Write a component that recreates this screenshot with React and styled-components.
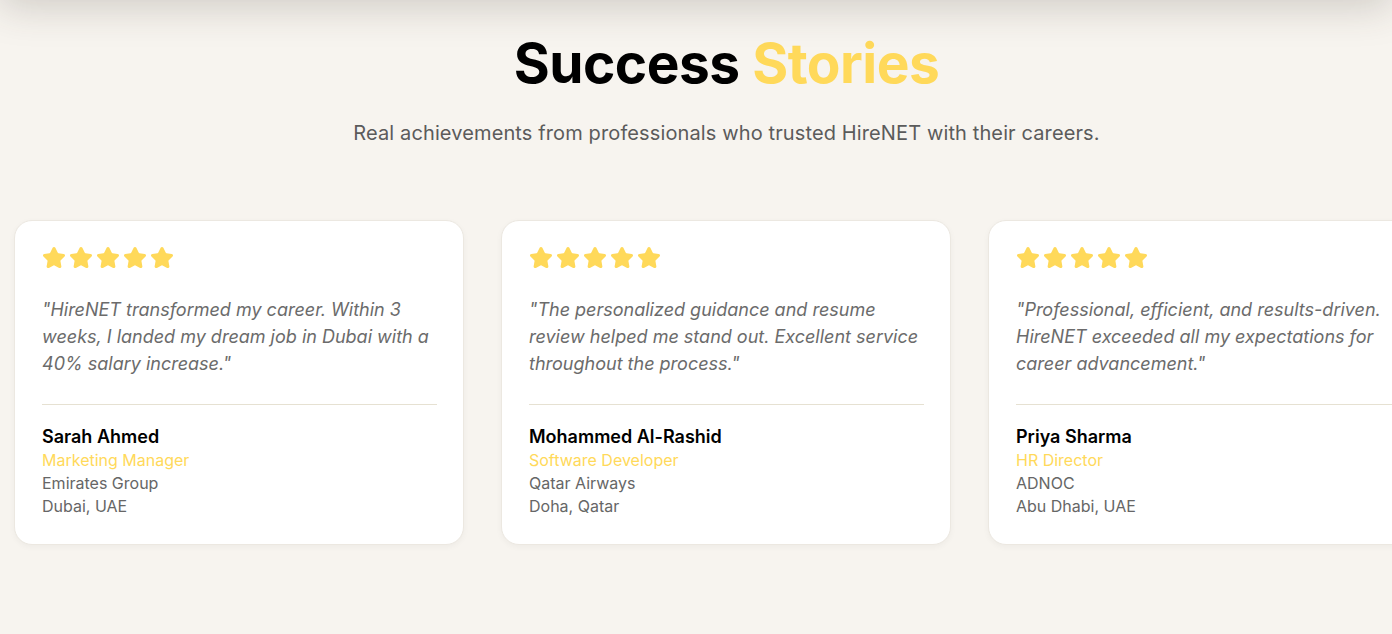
import React from "react";
import styled, { createGlobalStyle } from "styled-components";

const Global = createGlobalStyle`
  html, body { margin: 0; padding: 0; }
  body {
    background: #f7f4ef;
    font-family: Inter, "Noto Sans", sans-serif;
    overflow: hidden;
  }
`;

const HeaderShadow = styled.div`
  position: fixed;
  top: -60px;
  left: 0;
  right: 0;
  height: 60px;
  background: #f7f4ef;
  box-shadow: 0 6px 40px rgba(60, 50, 40, 0.22);
  z-index: 5;
`;

const Section = styled.section`
  width: 1455px;
  box-sizing: border-box;
  padding: 29px 16px 60px 14px;
  display: flex;
  flex-direction: column;
  align-items: center;
`;

const Title = styled.h2`
  margin: 0;
  font-size: 55px;
  line-height: 68px;
  font-weight: 700;
  color: #000;
  letter-spacing: -0.5px;
`;

const Accent = styled.span`
  color: #ffd95a;
`;

const Subtitle = styled.p`
  margin: 22px 0 0;
  font-size: 20px;
  line-height: 28px;
  letter-spacing: 0.12px;
  color: #5b5b5b;
`;

const Cards = styled.div`
  margin-top: 73px;
  width: 100%;
  display: grid;
  grid-template-columns: repeat(3, 450px);
  gap: 37px;
`;

const Card = styled.article`
  background: #fff;
  border: 1px solid #ece8e1;
  border-radius: 18px;
  box-shadow: 0 2px 6px rgba(0, 0, 0, 0.04);
  padding: 25px 26px 26px 27px;
  display: flex;
  flex-direction: column;
`;

const Stars = styled.div`
  display: flex;
  gap: 3px;
`;

const Quote = styled.p`
  margin: 26px 0 0;
  font-size: 18px;
  line-height: 27px;
  font-style: italic;
  color: #6b6b6b;
  min-height: 81px;
`;

const Divider = styled.hr`
  margin: 27px 0 0;
  border: none;
  border-top: 1px solid #e6e1d2;
`;

const Person = styled.div`
  margin-top: 20px;
  display: flex;
  flex-direction: column;
`;

const Name = styled.div`
  font-size: 18px;
  line-height: 24px;
  font-weight: 600;
  color: #000;
`;

const Line = styled.div`
  font-size: 16px;
  line-height: 23px;
  color: ${(p) => (p.$accent ? "#ffd95a" : "#666")};
`;

const Star = () => (
  <svg width="24" height="24" viewBox="0 0 24 24" fill="#ffd95a" stroke="#ffd95a" strokeWidth="2" strokeLinejoin="round" strokeLinecap="round">
    <path d="M11.525 2.295a.53.53 0 0 1 .95 0l2.31 4.679a2.123 2.123 0 0 0 1.595 1.16l5.166.756a.53.53 0 0 1 .294.904l-3.736 3.638a2.123 2.123 0 0 0-.611 1.878l.882 5.14a.53.53 0 0 1-.771.56l-4.618-2.428a2.122 2.122 0 0 0-1.973 0L6.396 21.01a.53.53 0 0 1-.77-.56l.881-5.139a2.122 2.122 0 0 0-.611-1.879L2.16 9.795a.53.53 0 0 1 .294-.906l5.165-.755a2.122 2.122 0 0 0 1.597-1.16z" />
  </svg>
);

const stories = [
  {
    quote: "\"HireNET transformed my career. Within 3 weeks, I landed my dream job in Dubai with a 40% salary increase.\"",
    name: "Sarah Ahmed",
    role: "Marketing Manager",
    company: "Emirates Group",
    location: "Dubai, UAE",
  },
  {
    quote: "\"The personalized guidance and resume review helped me stand out. Excellent service throughout the process.\"",
    name: "Mohammed Al-Rashid",
    role: "Software Developer",
    company: "Qatar Airways",
    location: "Doha, Qatar",
  },
  {
    quote: "\"Professional, efficient, and results-driven. HireNET exceeded all my expectations for career advancement.\"",
    name: "Priya Sharma",
    role: "HR Director",
    company: "ADNOC",
    location: "Abu Dhabi, UAE",
  },
];

export default function App() {
  return (
    <>
      <Global />
      <HeaderShadow />
      <Section>
        <Title>
          Success <Accent>Stories</Accent>
        </Title>
        <Subtitle>Real achievements from professionals who trusted HireNET with their careers.</Subtitle>
        <Cards>
          {stories.map((s) => (
            <Card key={s.name}>
              <Stars>
                {[0, 1, 2, 3, 4].map((i) => (
                  <Star key={i} />
                ))}
              </Stars>
              <Quote>{s.quote}</Quote>
              <Divider />
              <Person>
                <Name>{s.name}</Name>
                <Line $accent>{s.role}</Line>
                <Line>{s.company}</Line>
                <Line>{s.location}</Line>
              </Person>
            </Card>
          ))}
        </Cards>
      </Section>
    </>
  );
}
